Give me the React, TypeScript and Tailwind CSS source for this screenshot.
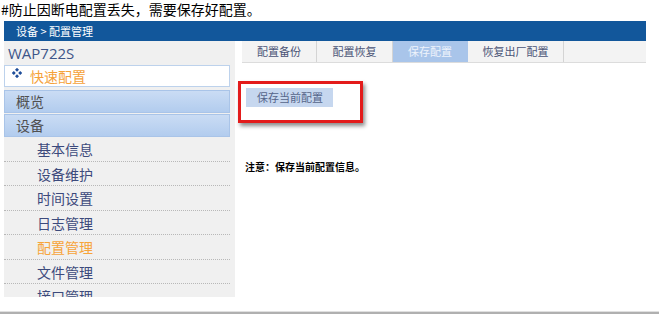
import React from "react";

const cjk = { fontFamily: '"Noto Sans CJK SC", "Noto Sans", sans-serif' };
const latin = { fontFamily: '"Open Sans", "Noto Sans", "Noto Sans CJK SC", sans-serif' };

const subItems = ["基本信息", "设备维护", "时间设置", "日志管理", "配置管理", "文件管理", "接口管理"];
const tabs = [
  { label: "配置备份", w: "w-[75px]" },
  { label: "配置恢复", w: "w-[76px]" },
  { label: "保存配置", w: "w-[75px]", active: true },
  { label: "恢复出厂配置", w: "w-[96px]" },
];

function Diamond() {
  return (
    <svg width="10" height="10" viewBox="0 0 10 10" className="block">
      <rect x="3.6" y="0.4" width="2.8" height="2.8" transform="rotate(45 5 1.8)" fill="#1f4e9a" />
      <rect x="3.6" y="6.8" width="2.8" height="2.8" transform="rotate(45 5 8.2)" fill="#1f4e9a" />
      <rect x="0.4" y="3.6" width="2.8" height="2.8" transform="rotate(45 1.8 5)" fill="#1f4e9a" />
      <rect x="6.8" y="3.6" width="2.8" height="2.8" transform="rotate(45 8.2 5)" fill="#1f4e9a" />
    </svg>
  );
}

export default function App() {
  return (
    <div className="w-[659px] h-[315px] bg-white overflow-hidden relative" style={cjk}>
      <div className="h-[21px] text-[14px] leading-[18px] text-black pl-[1px] whitespace-nowrap">#防止因断电配置丢失，需要保存好配置。</div>
      <div className="ml-[4px] w-[642px]">
        <div className="h-[20px] bg-[#12579b] text-white text-[11px] leading-[20px] pl-[12px] whitespace-pre">设备 &gt; 配置管理</div>
        <div className="flex h-[256px]">
          <div className="w-[231px] h-full bg-[#f0f0f0] overflow-hidden">
            <div className="h-[24px] text-[15px] leading-[24px] pl-[4px] text-[#3d5589]" style={latin}>WAP722S</div>
            <div className="mr-[5px] h-[22px] bg-white border border-[#bdd2ec] flex items-center pl-[7px]">
              <div className="-mt-[6px]"><Diamond /></div>
              <span className="ml-[8px] text-[14px] text-[#f5a23a] leading-[20px]">快速配置</span>
            </div>
            <div className="mr-[5px] mt-[3px] h-[23px] bg-gradient-to-b from-[#cadcf4] to-[#b2ccee] border border-[#a9c4e8] pl-[11px] text-[14px] leading-[21px] text-[#505050]">概览</div>
            <div className="mr-[5px] mt-[1px] h-[23px] bg-gradient-to-b from-[#cadcf4] to-[#b2ccee] border border-[#a9c4e8] pl-[11px] text-[14px] leading-[21px] text-[#505050]">设备</div>
            {subItems.map((s) => (
              <div
                key={s}
                className={`mr-[5px] h-[24.5px] border-b border-dotted border-[#b8b8b8] pl-[33px] text-[14px] leading-[24px] ${s === "配置管理" ? "text-[#f7a43a]" : "text-[#3c4a7c]"}`}
              >
                {s}
              </div>
            ))}
          </div>
          <div className="flex-1 flex flex-col">
            <div className="pl-[7px]">
              <div className="h-[22px] bg-[#f3f3f3] border-b border-[#dcdcdc] flex">
                {tabs.map((t) => (
                  <div
                    key={t.label}
                    className={`${t.w} h-full text-center text-[11px] leading-[21px] border-r ${t.active ? "bg-[#a9c5ea] text-[#eef3fb] border-[#a9c5ea]" : "text-[#4b5577] border-[#d4d4d4]"}`}
                  >
                    {t.label}
                  </div>
                ))}
              </div>
            </div>
            <div className="ml-[3px] mt-[18px] w-[125px] h-[42px] border-[3px] border-[#e31b1b] shadow-[2px_3px_4px_rgba(0,0,0,0.45)] pl-[5px] pt-[4px]">
              <div className="w-[87px] h-[19px] bg-[#c6d7ef] text-[11px] leading-[19px] text-[#55658a] pl-[11px]">保存当前配置</div>
            </div>
            <div className="ml-[10px] mt-[37px] text-[10px] leading-[14px] font-bold text-black">注意：保存当前配置信息。</div>
          </div>
        </div>
      </div>
      <div className="absolute left-0 right-0 top-[311px] h-[1px] bg-[#e0e0e0]" />
      <div className="absolute left-0 right-0 top-[312px] h-[2px] bg-[#b0b0b0]" />
    </div>
  );
}
